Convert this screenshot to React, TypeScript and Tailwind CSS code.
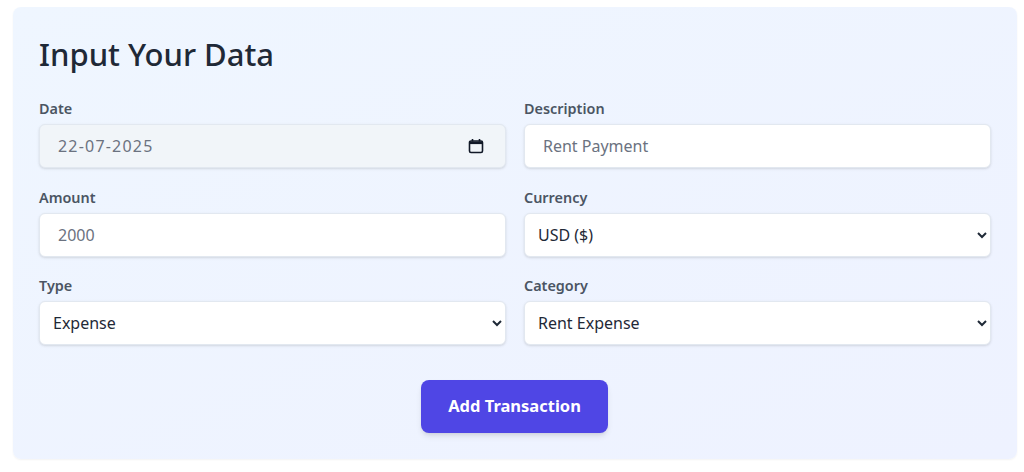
import { useState } from 'react';

const labelClass = 'block text-[14.4px] font-semibold text-[#4b5563] mb-[5px] leading-5';
const fieldClass =
  'block w-full h-[44px] rounded-md border border-[#e2e8f0] shadow-sm text-base outline-none';

function CalendarIcon() {
  return (
    <svg viewBox="0 0 16 16" className="w-4 h-4" fill="none">
      <path
        d="M3 3h10a1.5 1.5 0 0 1 1.5 1.5v8.5a1.5 1.5 0 0 1-1.5 1.5H3A1.5 1.5 0 0 1 1.5 13V4.500A1.500 1.500 0 0 1 3 3z"
        stroke="#111827"
        strokeWidth="1.6"
      />
      <path d="M1.500 3.500h13v2.600h-13z" fill="#111827" />
      <path d="M4.500 1v2.500M11.500 1v2.500" stroke="#111827" strokeWidth="1.600" />
    </svg>
  );
}

export default function App() {
  const [date, setDate] = useState('22-07-2025');
  const [description, setDescription] = useState('Rent Payment');
  const [amount, setAmount] = useState('2000');

  return (
    <div className="min-h-screen bg-white pl-[13px] pr-[7px] pt-[7px] font-['Noto_Sans',sans-serif]">
      <div className="h-[452px] rounded-lg bg-gradient-to-br from-[#eff6ff] to-[#eef2ff] px-[26px] pt-[23px] shadow-xs">
        <h2 className="text-[31px] leading-[48px] font-medium text-[#1f2937] mb-[21px]">Input Your Data</h2>

        <div className="grid grid-cols-2 gap-x-[18px] gap-y-[19.5px]">
          <div>
            <label className={labelClass}>Date</label>
            <div className="relative">
              <input
                value={date}
                onChange={(e) => setDate(e.target.value)}
                className={`${fieldClass} bg-[#f1f5f9] pl-[18px] pr-10 text-[#6b7280] tracking-[1.2px]`}
              />
              <span className="absolute right-[22px] top-[14px]">
                <CalendarIcon />
              </span>
            </div>
          </div>
          <div>
            <label className={labelClass}>Description</label>
            <input
              value={description}
              onChange={(e) => setDescription(e.target.value)}
              className={`${fieldClass} bg-white px-[18px] text-[#6b7280]`}
            />
          </div>
          <div>
            <label className={labelClass}>Amount</label>
            <input
              value={amount}
              onChange={(e) => setAmount(e.target.value)}
              className={`${fieldClass} bg-white px-[18px] text-[#6b7280]`}
            />
          </div>
          <div>
            <label className={labelClass}>Currency</label>
            <select className={`${fieldClass} bg-white pl-[9px] text-[#1f2937]`} defaultValue="USD">
              <option value="USD">USD ($)</option>
              <option value="EUR">EUR (€)</option>
            </select>
          </div>
          <div>
            <label className={labelClass}>Type</label>
            <select className={`${fieldClass} bg-white pl-[9px] text-[#1f2937]`} defaultValue="Expense">
              <option>Expense</option>
              <option>Income</option>
            </select>
          </div>
          <div>
            <label className={labelClass}>Category</label>
            <select className={`${fieldClass} bg-white pl-[9px] text-[#1f2937]`} defaultValue="Rent Expense">
              <option>Rent Expense</option>
              <option>Utilities</option>
            </select>
          </div>
        </div>

        <div className="flex justify-center mt-[35px] pr-px">
          <button className="w-[187px] h-[53px] rounded-lg bg-[#4f46e5] text-white font-bold text-[16.5px] shadow-md">
            Add Transaction
          </button>
        </div>
      </div>
    </div>
  );
}
